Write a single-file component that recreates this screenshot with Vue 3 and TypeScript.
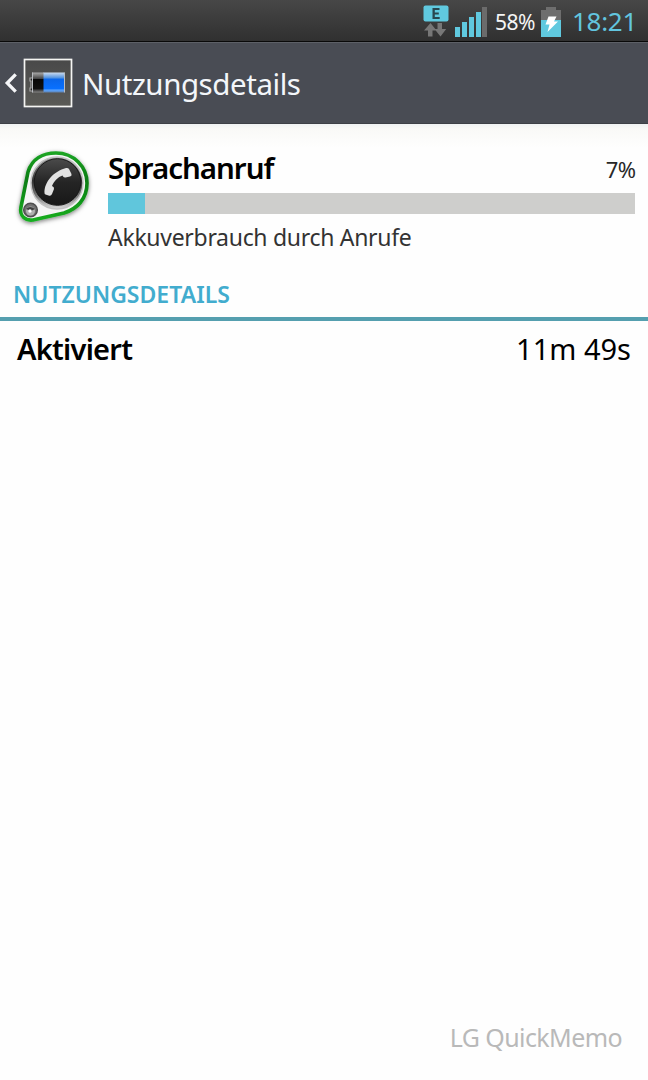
<script setup lang="ts">
interface UsageEntry {
  label: string
  value: string
}

const consumer = {
  name: 'Sprachanruf',
  percent: 7,
  description: 'Akkuverbrauch durch Anrufe',
}
const entries: UsageEntry[] = [{ label: 'Aktiviert', value: '11m 49s' }]
</script>

<template>
  <div class="screen">
    <header class="status">
      <svg class="network" width="26" height="34" viewBox="0 0 26 34">
        <rect x="0.5" y="0.5" width="25" height="16" rx="2" fill="#60c9df" />
        <path d="M9.5 3h7v2h-4.700v2.500h4v2h-4V12h4.900v2H9.500z" fill="#28464f" />
        <path d="M7.500 18l6 7.500h-4v6h-4.500v-6h-4zM14.500 18h4.500v6h4.200L17.500 31.500l-6-7.500h3z" fill="#777" />
      </svg>
      <svg class="signal" width="33" height="32" viewBox="0 0 33 32">
        <g fill="#60c9df">
          <rect x="0" y="21" width="5" height="10" />
          <rect x="7" y="16" width="5" height="15" />
          <rect x="14" y="11" width="5" height="20" />
          <rect x="21" y="6" width="5" height="25" />
        </g>
        <rect x="27" y="1" width="5" height="30" fill="#6b6b6b" />
      </svg>
      <span class="charge">58%</span>
      <svg class="cell" width="20" height="32" viewBox="0 0 20 32">
        <path d="M5 1h10v3h5v10H0V4h5z" fill="#6e6e6e" />
        <rect y="14" width="20" height="17" fill="#60c9df" />
        <path d="M7.500 10.500h8l-2.500 5h4L6.500 26l2-7.500H4.500z" fill="#fff" />
      </svg>
      <span class="clock">18:21</span>
    </header>

    <nav class="bar">
      <svg class="back" width="14" height="24" viewBox="0 0 14 24">
        <path d="M11.700 3.300L3.200 12l8.500 8.700" fill="none" stroke="#f5f6f8" stroke-width="3.300" />
      </svg>
      <svg class="app" width="50" height="50" viewBox="0 0 50 50">
        <defs>
          <linearGradient id="blue" x2="0" y2="1">
            <stop offset="0" stop-color="#ccdcef" />
            <stop offset=".26" stop-color="#5795e0" />
            <stop offset=".34" stop-color="#0a66ea" />
            <stop offset=".8" stop-color="#0870ff" />
            <stop offset=".88" stop-color="#57a2ff" />
            <stop offset="1" stop-color="#6184b1" />
          </linearGradient>
          <linearGradient id="black" x2="0" y2="1">
            <stop offset="0" stop-color="#aaa" />
            <stop offset=".3" stop-color="#464646" />
            <stop offset=".35" stop-color="#080808" />
            <stop offset=".8" stop-color="#101010" />
            <stop offset="1" stop-color="#858585" />
          </linearGradient>
          <linearGradient id="tile" x2="0" y2="1">
            <stop offset="0" stop-color="#494949" />
            <stop offset="1" stop-color="#5b5b57" />
          </linearGradient>
        </defs>
        <rect x="1.500" y="1.500" width="47" height="47" fill="url(#tile)" stroke="#f5f5f3" stroke-width="1.700" />
        <path d="M9 20H7v3h1v7H7v3h2" fill="#222" stroke="#aaa" stroke-width="1.200" />
        <rect x="9" y="14.500" width="12" height="20" fill="url(#black)" />
        <rect x="20.500" y="14.500" width="21" height="20" fill="url(#blue)" />
        <path d="M9.500 14.500v20M41.500 14.500v20" stroke="#b9bdc2" />
      </svg>
      <h1>Nutzungsdetails</h1>
    </nav>

    <main>
      <section class="consumer">
        <svg class="call" width="82" height="84" viewBox="0 0 82 84">
          <defs>
            <linearGradient id="ring" x2="0" y2="1">
              <stop offset="0" stop-color="#999" />
              <stop offset=".45" stop-color="#333" />
              <stop offset=".75" stop-color="#777" />
              <stop offset="1" stop-color="#ddd" />
            </linearGradient>
            <linearGradient id="disc" x2="0" y2="1">
              <stop offset="0" stop-color="#4b4b4b" />
              <stop offset=".5" stop-color="#252525" />
              <stop offset="1" stop-color="#181818" />
            </linearGradient>
            <linearGradient id="rim" x2="0" y2="1">
              <stop offset="0" stop-color="#1ca424" />
              <stop offset=".4" stop-color="#0a7c12" />
              <stop offset="1" stop-color="#17ad20" />
            </linearGradient>
            <filter id="shade" x="-20%" y="-20%" width="140%" height="140%">
              <feDropShadow dx="0" dy="1.500" stdDeviation="2" flood-opacity=".5" />
            </filter>
          </defs>
          <path
            d="M28 27C32 14 43 8 56 8C74 8 87 22 87 38C87 54 77 64 64 68L35 74.500C26 77 19 71 21 62Z"
            fill="#f5f5f5"
            stroke="url(#rim)"
            stroke-width="3.600"
            stroke-linejoin="round"
            filter="url(#shade)"
          />
          <circle cx="57" cy="38" r="26" fill="url(#ring)" stroke="#c3c3c3" stroke-width="1.500" />
          <circle cx="57.500" cy="37" r="23.300" fill="url(#disc)" stroke="#191919" />
          <path
            d="M44.500 48C44 37 54 26 66 23Q68 22.500 69 24L71.500 29Q72 31 70 31.500L65.500 32.500Q63.500 33 62.500 30.500C58 32 54 36 52 41Q54.500 42 54 44L52 49Q51 51.500 48.500 50.500L45.500 49.500Q44.500 49 44.500 48Z"
            fill="#e2e2e2"
          />
          <circle cx="30.500" cy="65" r="6.800" fill="#737373" stroke="#505050" stroke-width="1.500" />
          <circle cx="30.500" cy="66" r="4.500" fill="#b0b0b0" />
          <path d="M26 64q4-4 9 0l-4 2z" fill="#404040" />
          <circle cx="30" cy="66" r="1.700" fill="#fff" />
        </svg>
        <div class="info">
          <div class="top">
            <h2>{{ consumer.name }}</h2>
            <span class="percent">{{ consumer.percent }}%</span>
          </div>
          <div class="track"><div class="fill" :style="{ width: consumer.percent + '%' }"></div></div>
          <p>{{ consumer.description }}</p>
        </div>
      </section>
      <h3><span>NUTZUNGSDETAILS</span></h3>
      <div v-for="entry in entries" :key="entry.label" class="entry">
        <strong>{{ entry.label }}</strong>
        <span>{{ entry.value }}</span>
      </div>
    </main>
    <footer><span>LG QuickMemo</span></footer>
  </div>
</template>

<style>
body {
  margin: 0;
}
</style>

<style scoped>
.screen {
  width: 648px;
  height: 1080px;
  display: flex;
  flex-direction: column;
  overflow: hidden;
  background: #fefefe;
  color: #000;
  font-family: "Noto Sans", "Open Sans", sans-serif;
  white-space: nowrap;
}
h1,
h2,
h3,
p {
  margin: 0;
}
svg {
  display: block;
  flex: none;
}
.status {
  box-sizing: border-box;
  height: 42px;
  display: flex;
  align-items: flex-start;
  padding: 5px 0 0 423px;
  background: linear-gradient(#474747, #303030);
  border-bottom: 1px solid #090909;
}
.signal {
  margin: 1px 0 0 6px;
}
.charge {
  width: 40px;
  margin-left: 7px;
  color: #f5f5f5;
  font-size: 21px;
  line-height: 34px;
  letter-spacing: -0.5px;
}
.cell {
  margin: 1px 0 0 6px;
}
.clock {
  margin-left: 11px;
  color: #62c5df;
  font-size: 26px;
  line-height: 33px;
  letter-spacing: -0.3px;
}
.bar {
  box-sizing: border-box;
  height: 82px;
  display: flex;
  align-items: center;
  padding-left: 4px;
  background: #494c54;
  border-top: 1px solid #5d6067;
  border-bottom: 1px solid #3d4046;
}
.app {
  margin-left: 5px;
}
h1 {
  margin-left: 9px;
  color: #f3f6fa;
  font-size: 29.5px;
  font-weight: 400;
  line-height: 80px;
  padding-top: 2px;
  letter-spacing: -0.45px;
}
main {
  flex: 1;
  background: linear-gradient(#eff2f2 0, #f9f9f7 5px, #fefefe 24px);
}
.consumer {
  height: 151px;
  display: flex;
}
.call {
  margin-top: 21px;
  overflow: visible;
}
.info {
  width: 527px;
  margin-left: 26px;
  padding-top: 23px;
}
.top {
  height: 46px;
  display: flex;
  justify-content: space-between;
}
h2 {
  font-size: 29.5px;
  font-weight: 600;
  line-height: 41px;
  letter-spacing: -1px;
}
.percent {
  color: #282828;
  font-size: 22px;
  line-height: 45px;
  letter-spacing: -0.5px;
  margin-right: -0.5px;
}
.track {
  height: 21px;
  background: #cececc;
}
.fill {
  height: 21px;
  background: #60c6dc;
}
p {
  color: #333;
  font-size: 23px;
  line-height: 47px;
  letter-spacing: -0.3px;
}
h3 {
  box-sizing: border-box;
  height: 46px;
  padding-left: 13px;
  border-bottom: 4px solid #559faf;
  color: #42acce;
  font-size: 23px;
  font-weight: 600;
  line-height: 39px;
}
.entry {
  height: 58px;
  display: flex;
  justify-content: space-between;
  padding: 0 17px;
  font-size: 29px;
  line-height: 55px;
}
.entry strong {
  font-weight: 600;
  letter-spacing: -0.75px;
}
footer {
  padding: 0 26px 25px 0;
  color: #b9b9b9;
  font-size: 25px;
  line-height: 36px;
  letter-spacing: -0.6px;
  text-align: right;
}
</style>
